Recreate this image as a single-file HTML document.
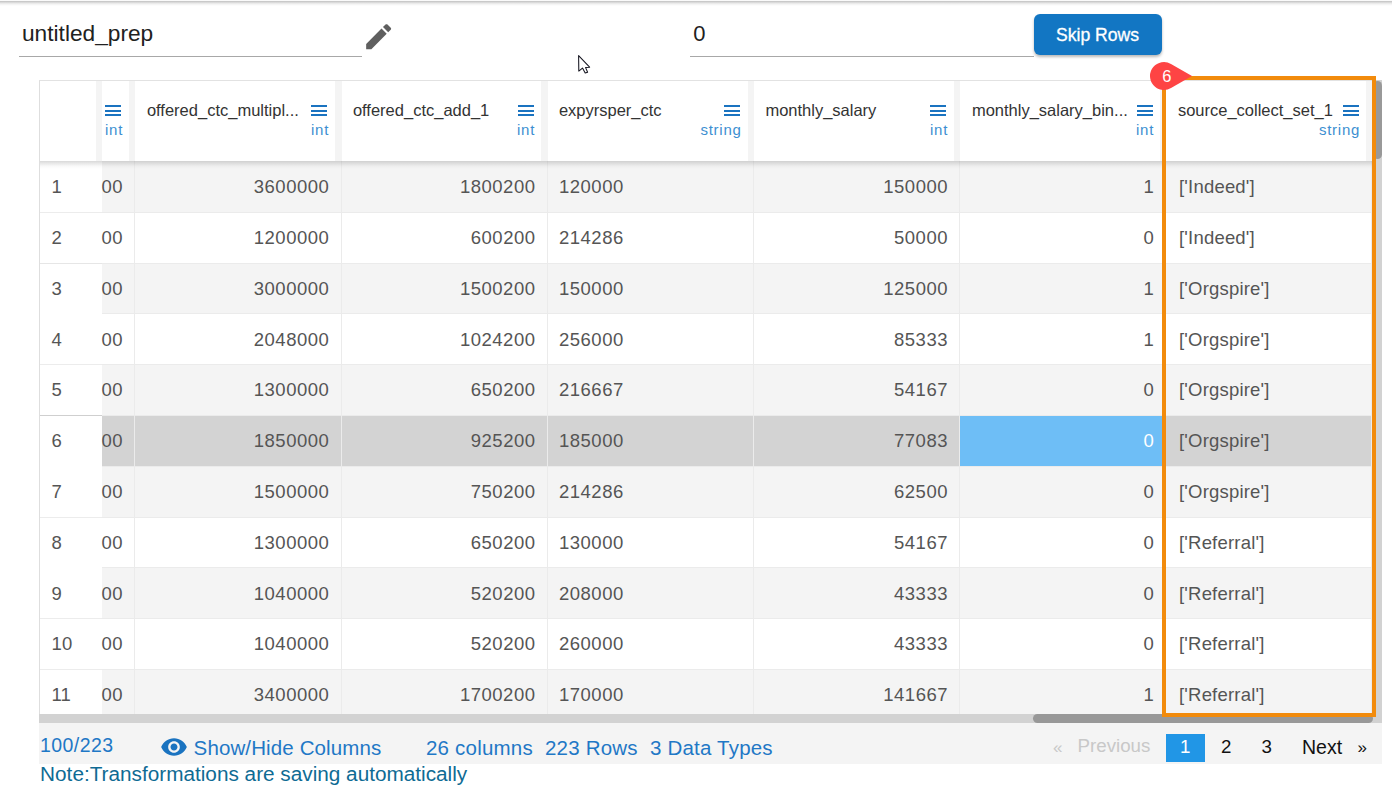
<!DOCTYPE html>
<html><head><meta charset="utf-8">
<style>
html,body{margin:0;padding:0;}
body{width:1392px;height:805px;overflow:hidden;position:relative;background:#fff;font-family:"Liberation Sans", sans-serif;}
.t{position:absolute;line-height:1;white-space:nowrap;}
.a{position:absolute;}
</style></head><body>
<div class="a" style="left:0;top:0;width:1392px;height:1px;background:#fafafa"></div><div class="a" style="left:0;top:1px;width:1392px;height:5px;background:linear-gradient(#c0c0c0,#d2d2d2 20%,#e8e8e8 45%,#f5f5f5 70%,#fcfcfc 90%,#fff)"></div>
<div class="t" style="left:22.00px;top:21.68px;font-size:22.7px;color:#212121;">untitled_prep</div>
<div class="a" style="left:19px;top:56px;width:343px;height:1px;background:#a8a8a8"></div>
<svg class="a" style="left:362.3px;top:19.6px" width="33.3" height="33.3" viewBox="0 0 24 24"><path fill="#5f5f5f" d="M3 17.25V21h3.75L17.81 9.94l-3.75-3.75L3 17.25zM20.71 7.04c.39-.39.39-1.02 0-1.41l-2.34-2.34c-.39-.39-1.02-.39-1.41 0l-1.83 1.83 3.75 3.75 1.83-1.83z"/></svg>
<div class="t" style="left:693.30px;top:22.88px;font-size:22px;color:#212121;">0</div>
<div class="a" style="left:690px;top:56px;width:344px;height:1px;background:#a8a8a8"></div>
<div class="a" style="left:1034px;top:14px;width:128px;height:41px;border-radius:6px;background:#1276c3;box-shadow:0 2px 3px rgba(0,0,0,0.28)"></div>
<div class="t" style="left:1056.00px;top:27.10px;font-size:17.6px;color:#ffffff;-webkit-text-stroke:0.3px #fff;">Skip Rows</div>
<div class="a" style="left:39px;top:80px;width:1333px;height:634px;border-left:1px solid #dedede;border-top:1px solid #e2e2e2;box-sizing:border-box"></div>
<div class="a" style="left:40px;top:161px;width:1332px;height:553px;overflow:hidden">
<div class="a" style="left:62px;top:0.00px;width:1270px;height:51.80px;background:#f4f4f4;border-bottom:1px solid #ebebeb;box-sizing:border-box"></div><div class="a" style="left:0px;top:0.00px;width:62px;height:51.80px;background:#fff;border-bottom:1px solid #ececec;box-sizing:border-box"></div><div class="a" style="left:62px;top:51.80px;width:1270px;height:50.80px;background:#ffffff;border-bottom:1px solid #ebebeb;box-sizing:border-box"></div><div class="a" style="left:0px;top:51.80px;width:62px;height:50.80px;background:#fff;border-bottom:1px solid #e6e6e6;box-sizing:border-box"></div><div class="a" style="left:62px;top:102.60px;width:1270px;height:50.80px;background:#f4f4f4;border-bottom:1px solid #ebebeb;box-sizing:border-box"></div><div class="a" style="left:0px;top:102.60px;width:62px;height:50.80px;background:#fff;border-bottom:1px solid #fff;box-sizing:border-box"></div><div class="a" style="left:62px;top:153.40px;width:1270px;height:50.80px;background:#ffffff;border-bottom:1px solid #ebebeb;box-sizing:border-box"></div><div class="a" style="left:0px;top:153.40px;width:62px;height:50.80px;background:#fff;border-bottom:1px solid #ececec;box-sizing:border-box"></div><div class="a" style="left:62px;top:204.20px;width:1270px;height:50.80px;background:#f4f4f4;border-bottom:1px solid #ebebeb;box-sizing:border-box"></div><div class="a" style="left:0px;top:204.20px;width:62px;height:50.80px;background:#fff;border-bottom:1px solid #cfcfcf;box-sizing:border-box"></div><div class="a" style="left:62px;top:255.00px;width:1270px;height:50.80px;background:#d3d3d3;border-bottom:1px solid #ebebeb;box-sizing:border-box"></div><div class="a" style="left:0px;top:255.00px;width:62px;height:50.80px;background:#fff;border-bottom:1px solid #fff;box-sizing:border-box"></div><div class="a" style="left:920px;top:255.00px;width:206px;height:49.80px;background:#6ebef6"></div><div class="a" style="left:62px;top:305.80px;width:1270px;height:50.80px;background:#f4f4f4;border-bottom:1px solid #ebebeb;box-sizing:border-box"></div><div class="a" style="left:0px;top:305.80px;width:62px;height:50.80px;background:#fff;border-bottom:1px solid #ececec;box-sizing:border-box"></div><div class="a" style="left:62px;top:356.60px;width:1270px;height:50.80px;background:#ffffff;border-bottom:1px solid #ebebeb;box-sizing:border-box"></div><div class="a" style="left:0px;top:356.60px;width:62px;height:50.80px;background:#fff;border-bottom:1px solid #fff;box-sizing:border-box"></div><div class="a" style="left:62px;top:407.40px;width:1270px;height:50.80px;background:#f4f4f4;border-bottom:1px solid #ebebeb;box-sizing:border-box"></div><div class="a" style="left:0px;top:407.40px;width:62px;height:50.80px;background:#fff;border-bottom:1px solid #ececec;box-sizing:border-box"></div><div class="a" style="left:62px;top:458.20px;width:1270px;height:50.80px;background:#ffffff;border-bottom:1px solid #ebebeb;box-sizing:border-box"></div><div class="a" style="left:0px;top:458.20px;width:62px;height:50.80px;background:#fff;border-bottom:1px solid #ececec;box-sizing:border-box"></div><div class="a" style="left:62px;top:509.00px;width:1270px;height:50.80px;background:#f4f4f4;border-bottom:1px solid #ebebeb;box-sizing:border-box"></div><div class="a" style="left:0px;top:509.00px;width:62px;height:50.80px;background:#fff;border-bottom:1px solid #fff;box-sizing:border-box"></div>
<div class="a" style="left:94.00px;top:0;width:1px;height:553px;background:#ebebeb"></div><div class="a" style="left:301.00px;top:0;width:1px;height:553px;background:#ebebeb"></div><div class="a" style="left:507.00px;top:0;width:1px;height:553px;background:#ebebeb"></div><div class="a" style="left:713.00px;top:0;width:1px;height:553px;background:#ebebeb"></div><div class="a" style="left:919.00px;top:0;width:1px;height:553px;background:#ebebeb"></div><div class="a" style="left:1125.00px;top:0;width:1px;height:553px;background:#ebebeb"></div><div class="a" style="left:1331.00px;top:0;width:1px;height:553px;background:#ebebeb"></div>
<div class="t" style="left:11.60px;top:17.34px;font-size:18.5px;color:#555555;letter-spacing:0px">1</div><div class="t" style="left:61.50px;top:17.34px;font-size:18.5px;color:#555555;letter-spacing:0.5px">00</div><div class="t" style="right:1042.70px;top:17.34px;font-size:18.5px;color:#555555;letter-spacing:0.5px">3600000</div><div class="t" style="right:836.50px;top:17.34px;font-size:18.5px;color:#555555;letter-spacing:0.5px">1800200</div><div class="t" style="left:519.00px;top:17.34px;font-size:18.5px;color:#555555;letter-spacing:0.5px">120000</div><div class="t" style="right:424.00px;top:17.34px;font-size:18.5px;color:#555555;letter-spacing:0.5px">150000</div><div class="t" style="right:217.70px;top:17.34px;font-size:18.5px;color:#555555;letter-spacing:0.5px">1</div><div class="t" style="left:1139.00px;top:17.34px;font-size:18.5px;color:#555555;letter-spacing:0.2px">['Indeed']</div>
<div class="t" style="left:11.60px;top:68.12px;font-size:18.5px;color:#555555;letter-spacing:0px">2</div><div class="t" style="left:61.50px;top:68.12px;font-size:18.5px;color:#555555;letter-spacing:0.5px">00</div><div class="t" style="right:1042.70px;top:68.12px;font-size:18.5px;color:#555555;letter-spacing:0.5px">1200000</div><div class="t" style="right:836.50px;top:68.12px;font-size:18.5px;color:#555555;letter-spacing:0.5px">600200</div><div class="t" style="left:519.00px;top:68.12px;font-size:18.5px;color:#555555;letter-spacing:0.5px">214286</div><div class="t" style="right:424.00px;top:68.12px;font-size:18.5px;color:#555555;letter-spacing:0.5px">50000</div><div class="t" style="right:217.70px;top:68.12px;font-size:18.5px;color:#555555;letter-spacing:0.5px">0</div><div class="t" style="left:1139.00px;top:68.12px;font-size:18.5px;color:#555555;letter-spacing:0.2px">['Indeed']</div>
<div class="t" style="left:11.60px;top:118.90px;font-size:18.5px;color:#555555;letter-spacing:0px">3</div><div class="t" style="left:61.50px;top:118.90px;font-size:18.5px;color:#555555;letter-spacing:0.5px">00</div><div class="t" style="right:1042.70px;top:118.90px;font-size:18.5px;color:#555555;letter-spacing:0.5px">3000000</div><div class="t" style="right:836.50px;top:118.90px;font-size:18.5px;color:#555555;letter-spacing:0.5px">1500200</div><div class="t" style="left:519.00px;top:118.90px;font-size:18.5px;color:#555555;letter-spacing:0.5px">150000</div><div class="t" style="right:424.00px;top:118.90px;font-size:18.5px;color:#555555;letter-spacing:0.5px">125000</div><div class="t" style="right:217.70px;top:118.90px;font-size:18.5px;color:#555555;letter-spacing:0.5px">1</div><div class="t" style="left:1139.00px;top:118.90px;font-size:18.5px;color:#555555;letter-spacing:0.2px">['Orgspire']</div>
<div class="t" style="left:11.60px;top:169.68px;font-size:18.5px;color:#555555;letter-spacing:0px">4</div><div class="t" style="left:61.50px;top:169.68px;font-size:18.5px;color:#555555;letter-spacing:0.5px">00</div><div class="t" style="right:1042.70px;top:169.68px;font-size:18.5px;color:#555555;letter-spacing:0.5px">2048000</div><div class="t" style="right:836.50px;top:169.68px;font-size:18.5px;color:#555555;letter-spacing:0.5px">1024200</div><div class="t" style="left:519.00px;top:169.68px;font-size:18.5px;color:#555555;letter-spacing:0.5px">256000</div><div class="t" style="right:424.00px;top:169.68px;font-size:18.5px;color:#555555;letter-spacing:0.5px">85333</div><div class="t" style="right:217.70px;top:169.68px;font-size:18.5px;color:#555555;letter-spacing:0.5px">1</div><div class="t" style="left:1139.00px;top:169.68px;font-size:18.5px;color:#555555;letter-spacing:0.2px">['Orgspire']</div>
<div class="t" style="left:11.60px;top:220.46px;font-size:18.5px;color:#555555;letter-spacing:0px">5</div><div class="t" style="left:61.50px;top:220.46px;font-size:18.5px;color:#555555;letter-spacing:0.5px">00</div><div class="t" style="right:1042.70px;top:220.46px;font-size:18.5px;color:#555555;letter-spacing:0.5px">1300000</div><div class="t" style="right:836.50px;top:220.46px;font-size:18.5px;color:#555555;letter-spacing:0.5px">650200</div><div class="t" style="left:519.00px;top:220.46px;font-size:18.5px;color:#555555;letter-spacing:0.5px">216667</div><div class="t" style="right:424.00px;top:220.46px;font-size:18.5px;color:#555555;letter-spacing:0.5px">54167</div><div class="t" style="right:217.70px;top:220.46px;font-size:18.5px;color:#555555;letter-spacing:0.5px">0</div><div class="t" style="left:1139.00px;top:220.46px;font-size:18.5px;color:#555555;letter-spacing:0.2px">['Orgspire']</div>
<div class="t" style="left:11.60px;top:271.24px;font-size:18.5px;color:#555555;letter-spacing:0px">6</div><div class="t" style="left:61.50px;top:271.24px;font-size:18.5px;color:#555555;letter-spacing:0.5px">00</div><div class="t" style="right:1042.70px;top:271.24px;font-size:18.5px;color:#555555;letter-spacing:0.5px">1850000</div><div class="t" style="right:836.50px;top:271.24px;font-size:18.5px;color:#555555;letter-spacing:0.5px">925200</div><div class="t" style="left:519.00px;top:271.24px;font-size:18.5px;color:#555555;letter-spacing:0.5px">185000</div><div class="t" style="right:424.00px;top:271.24px;font-size:18.5px;color:#555555;letter-spacing:0.5px">77083</div><div class="t" style="right:217.70px;top:271.24px;font-size:18.5px;color:#ffffff;letter-spacing:0.5px">0</div><div class="t" style="left:1139.00px;top:271.24px;font-size:18.5px;color:#555555;letter-spacing:0.2px">['Orgspire']</div>
<div class="t" style="left:11.60px;top:322.02px;font-size:18.5px;color:#555555;letter-spacing:0px">7</div><div class="t" style="left:61.50px;top:322.02px;font-size:18.5px;color:#555555;letter-spacing:0.5px">00</div><div class="t" style="right:1042.70px;top:322.02px;font-size:18.5px;color:#555555;letter-spacing:0.5px">1500000</div><div class="t" style="right:836.50px;top:322.02px;font-size:18.5px;color:#555555;letter-spacing:0.5px">750200</div><div class="t" style="left:519.00px;top:322.02px;font-size:18.5px;color:#555555;letter-spacing:0.5px">214286</div><div class="t" style="right:424.00px;top:322.02px;font-size:18.5px;color:#555555;letter-spacing:0.5px">62500</div><div class="t" style="right:217.70px;top:322.02px;font-size:18.5px;color:#555555;letter-spacing:0.5px">0</div><div class="t" style="left:1139.00px;top:322.02px;font-size:18.5px;color:#555555;letter-spacing:0.2px">['Orgspire']</div>
<div class="t" style="left:11.60px;top:372.80px;font-size:18.5px;color:#555555;letter-spacing:0px">8</div><div class="t" style="left:61.50px;top:372.80px;font-size:18.5px;color:#555555;letter-spacing:0.5px">00</div><div class="t" style="right:1042.70px;top:372.80px;font-size:18.5px;color:#555555;letter-spacing:0.5px">1300000</div><div class="t" style="right:836.50px;top:372.80px;font-size:18.5px;color:#555555;letter-spacing:0.5px">650200</div><div class="t" style="left:519.00px;top:372.80px;font-size:18.5px;color:#555555;letter-spacing:0.5px">130000</div><div class="t" style="right:424.00px;top:372.80px;font-size:18.5px;color:#555555;letter-spacing:0.5px">54167</div><div class="t" style="right:217.70px;top:372.80px;font-size:18.5px;color:#555555;letter-spacing:0.5px">0</div><div class="t" style="left:1139.00px;top:372.80px;font-size:18.5px;color:#555555;letter-spacing:0.2px">['Referral']</div>
<div class="t" style="left:11.60px;top:423.58px;font-size:18.5px;color:#555555;letter-spacing:0px">9</div><div class="t" style="left:61.50px;top:423.58px;font-size:18.5px;color:#555555;letter-spacing:0.5px">00</div><div class="t" style="right:1042.70px;top:423.58px;font-size:18.5px;color:#555555;letter-spacing:0.5px">1040000</div><div class="t" style="right:836.50px;top:423.58px;font-size:18.5px;color:#555555;letter-spacing:0.5px">520200</div><div class="t" style="left:519.00px;top:423.58px;font-size:18.5px;color:#555555;letter-spacing:0.5px">208000</div><div class="t" style="right:424.00px;top:423.58px;font-size:18.5px;color:#555555;letter-spacing:0.5px">43333</div><div class="t" style="right:217.70px;top:423.58px;font-size:18.5px;color:#555555;letter-spacing:0.5px">0</div><div class="t" style="left:1139.00px;top:423.58px;font-size:18.5px;color:#555555;letter-spacing:0.2px">['Referral']</div>
<div class="t" style="left:11.60px;top:474.36px;font-size:18.5px;color:#555555;letter-spacing:0px">10</div><div class="t" style="left:61.50px;top:474.36px;font-size:18.5px;color:#555555;letter-spacing:0.5px">00</div><div class="t" style="right:1042.70px;top:474.36px;font-size:18.5px;color:#555555;letter-spacing:0.5px">1040000</div><div class="t" style="right:836.50px;top:474.36px;font-size:18.5px;color:#555555;letter-spacing:0.5px">520200</div><div class="t" style="left:519.00px;top:474.36px;font-size:18.5px;color:#555555;letter-spacing:0.5px">260000</div><div class="t" style="right:424.00px;top:474.36px;font-size:18.5px;color:#555555;letter-spacing:0.5px">43333</div><div class="t" style="right:217.70px;top:474.36px;font-size:18.5px;color:#555555;letter-spacing:0.5px">0</div><div class="t" style="left:1139.00px;top:474.36px;font-size:18.5px;color:#555555;letter-spacing:0.2px">['Referral']</div>
<div class="t" style="left:11.60px;top:525.14px;font-size:18.5px;color:#555555;letter-spacing:0px">11</div><div class="t" style="left:61.50px;top:525.14px;font-size:18.5px;color:#555555;letter-spacing:0.5px">00</div><div class="t" style="right:1042.70px;top:525.14px;font-size:18.5px;color:#555555;letter-spacing:0.5px">3400000</div><div class="t" style="right:836.50px;top:525.14px;font-size:18.5px;color:#555555;letter-spacing:0.5px">1700200</div><div class="t" style="left:519.00px;top:525.14px;font-size:18.5px;color:#555555;letter-spacing:0.5px">170000</div><div class="t" style="right:424.00px;top:525.14px;font-size:18.5px;color:#555555;letter-spacing:0.5px">141667</div><div class="t" style="right:217.70px;top:525.14px;font-size:18.5px;color:#555555;letter-spacing:0.5px">1</div><div class="t" style="left:1139.00px;top:525.14px;font-size:18.5px;color:#555555;letter-spacing:0.2px">['Referral']</div>
</div>
<div class="a" style="left:40px;top:81px;width:1332px;height:80px;background:#fff"></div>
<div class="a" style="left:40px;top:161px;width:1332px;height:8px;background:linear-gradient(rgba(0,0,0,.15), rgba(0,0,0,.12) 14%, rgba(0,0,0,.095) 28%, rgba(0,0,0,.065) 43%, rgba(0,0,0,.04) 57%, rgba(0,0,0,.02) 71%, rgba(0,0,0,0))"></div>
<div class="a" style="left:96.00px;top:81px;width:6.00px;height:80px;background:#f4f4f4"></div><div class="a" style="left:129.00px;top:81px;width:6.00px;height:80px;background:#f4f4f4"></div><div class="a" style="left:335.00px;top:81px;width:7.00px;height:80px;background:#f4f4f4"></div><div class="a" style="left:541.00px;top:81px;width:7.00px;height:80px;background:#f4f4f4"></div><div class="a" style="left:747.50px;top:81px;width:6.50px;height:80px;background:#f4f4f4"></div><div class="a" style="left:954.00px;top:81px;width:6.00px;height:80px;background:#f4f4f4"></div><div class="a" style="left:1160.00px;top:81px;width:6.00px;height:80px;background:#f4f4f4"></div><div class="a" style="left:1366.00px;top:81px;width:6.00px;height:80px;background:#f4f4f4"></div>
<div class="a" style="left:105.20px;top:105px;width:16px;height:2px;background:#1a73c0"></div><div class="a" style="left:105.20px;top:109.5px;width:16px;height:2px;background:#1a73c0"></div><div class="a" style="left:105.20px;top:114px;width:16px;height:2px;background:#1a73c0"></div><div class="t" style="right:1268.90px;top:122.30px;font-size:15px;color:#3d8fd1;letter-spacing:0.75px;">int</div>

<div class="t" style="left:146.90px;top:102.23px;font-size:16.5px;color:#333333;">offered_ctc_multipl...</div>
<div class="a" style="left:311.30px;top:105px;width:16px;height:2px;background:#1a73c0"></div><div class="a" style="left:311.30px;top:109.5px;width:16px;height:2px;background:#1a73c0"></div><div class="a" style="left:311.30px;top:114px;width:16px;height:2px;background:#1a73c0"></div><div class="t" style="right:1062.90px;top:122.30px;font-size:15px;color:#3d8fd1;letter-spacing:0.75px;">int</div>

<div class="t" style="left:352.90px;top:102.23px;font-size:16.5px;color:#333333;">offered_ctc_add_1</div>
<div class="a" style="left:517.90px;top:105px;width:16px;height:2px;background:#1a73c0"></div><div class="a" style="left:517.90px;top:109.5px;width:16px;height:2px;background:#1a73c0"></div><div class="a" style="left:517.90px;top:114px;width:16px;height:2px;background:#1a73c0"></div><div class="t" style="right:856.90px;top:122.30px;font-size:15px;color:#3d8fd1;letter-spacing:0.75px;">int</div>

<div class="t" style="left:558.90px;top:102.23px;font-size:16.5px;color:#333333;">expyrsper_ctc</div>
<div class="a" style="left:724.00px;top:105px;width:16px;height:2px;background:#1a73c0"></div><div class="a" style="left:724.00px;top:109.5px;width:16px;height:2px;background:#1a73c0"></div><div class="a" style="left:724.00px;top:114px;width:16px;height:2px;background:#1a73c0"></div><div class="t" style="right:650.40px;top:122.30px;font-size:15px;color:#3d8fd1;letter-spacing:0.75px;">string</div>

<div class="t" style="left:765.40px;top:102.23px;font-size:16.5px;color:#333333;">monthly_salary</div>
<div class="a" style="left:930.20px;top:105px;width:16px;height:2px;background:#1a73c0"></div><div class="a" style="left:930.20px;top:109.5px;width:16px;height:2px;background:#1a73c0"></div><div class="a" style="left:930.20px;top:114px;width:16px;height:2px;background:#1a73c0"></div><div class="t" style="right:443.90px;top:122.30px;font-size:15px;color:#3d8fd1;letter-spacing:0.75px;">int</div>

<div class="t" style="left:971.90px;top:102.23px;font-size:16.5px;color:#333333;">monthly_salary_bin...</div>
<div class="a" style="left:1136.60px;top:105px;width:16px;height:2px;background:#1a73c0"></div><div class="a" style="left:1136.60px;top:109.5px;width:16px;height:2px;background:#1a73c0"></div><div class="a" style="left:1136.60px;top:114px;width:16px;height:2px;background:#1a73c0"></div><div class="t" style="right:237.90px;top:122.30px;font-size:15px;color:#3d8fd1;letter-spacing:0.75px;">int</div>

<div class="t" style="left:1177.90px;top:102.23px;font-size:16.5px;color:#333333;">source_collect_set_1</div>
<div class="a" style="left:1342.90px;top:105px;width:16px;height:2px;background:#1a73c0"></div><div class="a" style="left:1342.90px;top:109.5px;width:16px;height:2px;background:#1a73c0"></div><div class="a" style="left:1342.90px;top:114px;width:16px;height:2px;background:#1a73c0"></div><div class="t" style="right:31.90px;top:122.30px;font-size:15px;color:#3d8fd1;letter-spacing:0.75px;">string</div>

<div class="a" style="left:39px;top:714px;width:1343px;height:9px;background:#d2d2d2"></div><div class="a" style="left:1033px;top:714px;width:340px;height:8.5px;border-radius:4.5px;background:#989898"></div>
<div class="a" style="left:1372px;top:80px;width:10px;height:634px;background:#d2d2d2"></div><div class="a" style="left:1373px;top:81px;width:8.5px;height:78px;border-radius:4.5px;background:#999"></div>
<div class="a" style="left:39px;top:723px;width:1343px;height:41px;background:#f4f4f4"></div>
<div class="t" style="left:39.90px;top:736.49px;font-size:19.5px;color:#1f78c6;letter-spacing:0.45px;">100/223</div>
<svg class="a" style="left:160px;top:732.75px" width="28" height="28" viewBox="0 0 24 24"><path fill="#1a73c0" d="M12 4.5C7 4.5 2.73 7.61 1 12c1.73 4.39 6 7.5 11 7.5s9.27-3.11 11-7.5c-1.73-4.39-6-7.5-11-7.5zM12 17c-2.76 0-5-2.24-5-5s2.24-5 5-5 5 2.24 5 5-2.24 5-5 5zm0-8c-1.66 0-3 1.34-3 3s1.34 3 3 3 3-1.34 3-3-1.34-3-3-3z"/></svg>
<div class="t" style="left:193.60px;top:737.65px;font-size:20.5px;color:#1f78c6;letter-spacing:0.12px;">Show/Hide Columns</div>
<div class="t" style="left:426.00px;top:738.05px;font-size:20.5px;color:#1f78c6;letter-spacing:0.2px;">26 columns</div>
<div class="t" style="left:545.00px;top:738.05px;font-size:20.5px;color:#1f78c6;letter-spacing:0.2px;">223 Rows</div>
<div class="t" style="left:650.00px;top:738.05px;font-size:20.5px;color:#1f78c6;letter-spacing:0.2px;">3 Data Types</div>
<div class="t" style="left:1053.00px;top:738.81px;font-size:17px;color:#c8c8c8;">&laquo;</div>
<div class="t" style="left:1077.60px;top:737.37px;font-size:18.7px;color:#c8c8c8;">Previous</div>
<div class="a" style="left:1166px;top:734px;width:39px;height:28px;background:#2196e6"></div><div class="t" style="left:1180.00px;top:737.87px;font-size:18.7px;color:#ffffff;">1</div>
<div class="t" style="left:1221.00px;top:738.17px;font-size:18.7px;color:#111111;">2</div>
<div class="t" style="left:1261.40px;top:738.17px;font-size:18.7px;color:#111111;">3</div>
<div class="t" style="left:1302.00px;top:738.09px;font-size:19.5px;color:#111111;">Next</div>
<div class="t" style="left:1357.50px;top:738.81px;font-size:17px;color:#111111;">&raquo;</div>

<div class="t" style="left:40.10px;top:764.34px;font-size:20.75px;color:#0f6b94;">Note:Transformations are saving automatically</div>
<div class="a" style="left:1162px;top:76px;width:214px;height:641px;border:4px solid #f28b0c;box-sizing:border-box"></div>
<svg class="a" style="left:1140px;top:55px" width="60" height="40" viewBox="1140 55 60 40"><path fill="#fe4444" d="M1192 76 L1171 63.88 A14 14 0 1 0 1171 88.12 Z"/></svg><div class="t" style="left:1162.20px;top:68.03px;font-size:16.5px;color:#ffffff;">6</div>
<svg class="a" style="left:570px;top:50px" width="30" height="30" viewBox="570 50 30 30"><path d="M578.6 55.6 L578.8 71.1 L582.5 68.1 L585.2 73.0 L587.6 72.2 L585.6 67.6 L589.6 67.2 Z" fill="#fff" stroke="#151520" stroke-width="1.05" stroke-linejoin="round"/></svg>
</body></html>
